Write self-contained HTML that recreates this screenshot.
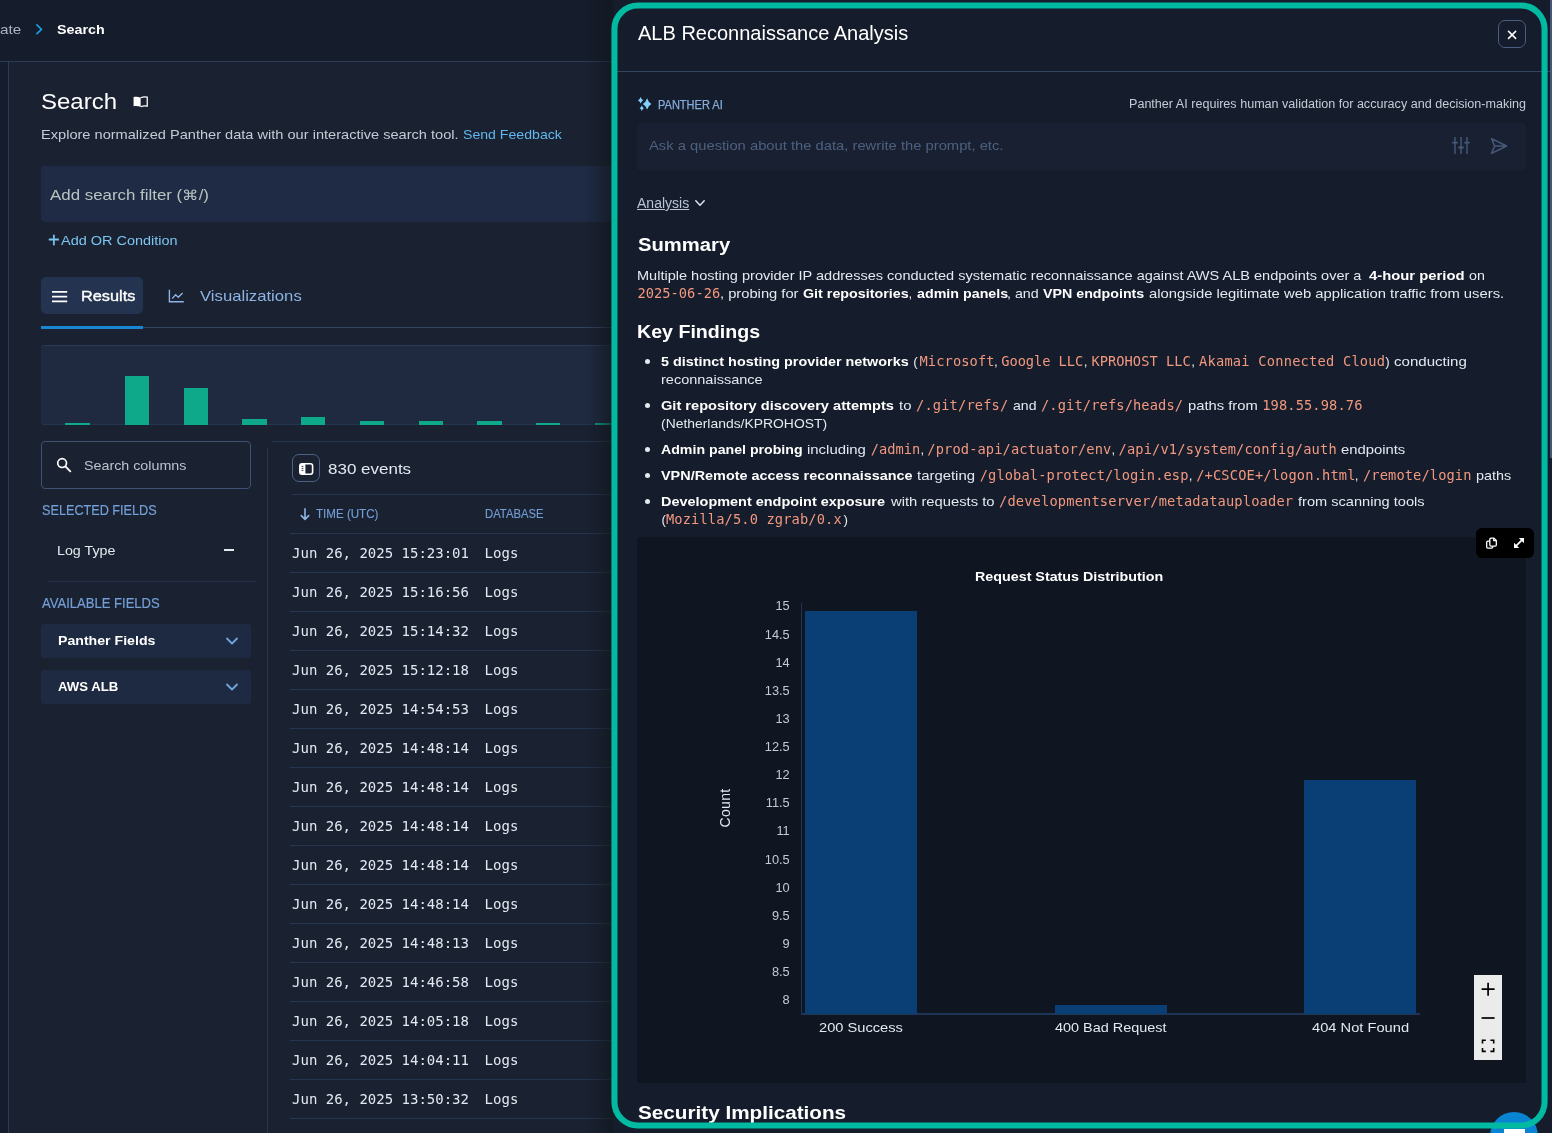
<!DOCTYPE html>
<html lang="en">
<head>
<meta charset="utf-8">
<title>Search - ALB Reconnaissance Analysis</title>
<style>
*{box-sizing:border-box;margin:0;padding:0}
html,body{width:1552px;height:1133px;overflow:hidden;background:#1a2131;font-family:"Liberation Sans",sans-serif;color:#e4e9f1}
.abs,.t{position:absolute;white-space:nowrap}
.t{line-height:1}
.layer{position:absolute;left:0;top:0;width:1552px;height:1133px;overflow:hidden;will-change:transform}
#topbar{position:absolute;left:0;top:0;width:1552px;height:62px;background:#151c2b;border-bottom:1px solid #2d3d59}
#strip{position:absolute;left:0;top:62px;width:9px;height:1080px;background:#151c2b;border-right:1px solid #2b3a57}
.hl{position:absolute;height:1px;background:#26364f}
.bar{position:absolute;bottom:0;width:24.4px;background:#0ea88a}
#drawer{position:absolute;left:613px;top:0;width:939px;height:1133px;background:#151c2b;}
#teal{position:absolute;left:611.4px;top:2.45px;width:936.2px;height:1126.1px;border:6.1px solid #01baa1;border-radius:25px}
.cb{position:absolute;width:112.3px;background:#0a3f76}
</style>
</head>
<body>
<div class="layer" id="left">
  <div id="topbar"></div>
  <div id="strip"></div>
  <svg class="abs" style="left:35px;top:23px" width="9" height="13" viewBox="0 0 9 13"><path d="M1.9 1.9 L6.5 6.3 L1.9 10.7" fill="none" stroke="#1a9be6" stroke-width="1.7" stroke-linecap="round" stroke-linejoin="round"/></svg>
  <svg class="abs" style="left:132.8px;top:96.4px" width="15.5" height="11.7" viewBox="0 0 16 13" preserveAspectRatio="none"><path d="M0.6 1.2 C3 0.5 5.4 0.7 7.9 1.9 L7.9 12 C5.4 10.9 3 10.8 0.6 11.3 Z" fill="#fff"/><path d="M7.9 1.9 C9.9 0.9 12.2 0.6 14.7 1.2 L14.7 11.3 C12.2 10.8 9.9 11 7.9 12" fill="none" stroke="#fff" stroke-width="1.3"/></svg>

  <div class="abs" style="left:41px;top:166px;width:580px;height:56px;background:#1f2a44;border-radius:4px"></div>

  <div class="abs" style="left:41px;top:277px;width:101.6px;height:36.6px;background:#24334f;border-radius:5px"></div>
  <svg class="abs" style="left:51.5px;top:289.5px" width="16" height="13" viewBox="0 0 16 13"><path d="M0 1.8H15.2M0 6.6H15.2M0 11.4H15.2" stroke="#fff" stroke-width="1.7"/></svg>
  <svg class="abs" style="left:168px;top:289px" width="17" height="15" viewBox="0 0 17 15"><path d="M1.4 0.8V12.7H15.8" fill="none" stroke="#8db4e3" stroke-width="1.4"/><path d="M4.2 9.6L7.6 5.8L10.3 8.3L14.6 4" fill="none" stroke="#8db4e3" stroke-width="1.4" stroke-linejoin="round"/></svg>
  <div class="abs" style="left:41px;top:327px;width:580px;height:1px;background:#34435e"></div>
  <div class="abs" style="left:41px;top:325.5px;width:101.6px;height:3.2px;background:#1a86d2"></div>

  <div class="abs" style="left:41px;top:345px;width:580px;height:79.5px;background:#1f2a40;border-radius:3px;overflow:hidden;border-top:1px solid #2a3a55;box-shadow:inset 0 -1px 0 #27364f">
    <div class="bar" style="left:24.2px;height:1.5px"></div>
    <div class="bar" style="left:83.8px;height:48.3px"></div>
    <div class="bar" style="left:142.5px;height:36.3px"></div>
    <div class="bar" style="left:201.2px;height:5.8px"></div>
    <div class="bar" style="left:259.9px;height:7.8px"></div>
    <div class="bar" style="left:319px;height:3.8px"></div>
    <div class="bar" style="left:377.7px;height:3.8px"></div>
    <div class="bar" style="left:436.4px;height:3.8px"></div>
    <div class="bar" style="left:494.6px;height:1.4px"></div>
    <div class="bar" style="left:553.5px;height:1.4px"></div>
  </div>

  <div class="abs" style="left:41px;top:441px;width:210px;height:48px;border:1px solid #3d5272;border-radius:4px"></div>
  <svg class="abs" style="left:56px;top:457px" width="16" height="16" viewBox="0 0 16 16"><circle cx="6.1" cy="6.1" r="4.4" fill="none" stroke="#fff" stroke-width="1.7"/><path d="M9.4 9.4L14.3 14.3" stroke="#fff" stroke-width="1.9" stroke-linecap="round"/></svg>
  <div class="abs" style="left:224px;top:549px;width:10px;height:1.6px;background:#e4e9f1"></div>
  <div class="hl" style="left:47px;top:581px;width:209px;background:#232f48"></div>
  <div class="abs" style="left:41px;top:624px;width:210px;height:34px;background:#1e2a41;border-radius:3px"></div>
  <svg class="abs" style="left:225px;top:636px" width="14" height="10" viewBox="0 0 14 10"><path d="M2 2.5L7 7.5L12 2.5" fill="none" stroke="#6ea6e0" stroke-width="1.8" stroke-linecap="round" stroke-linejoin="round"/></svg>
  <div class="abs" style="left:41px;top:670px;width:210px;height:34px;background:#1e2a41;border-radius:3px"></div>
  <svg class="abs" style="left:225px;top:682px" width="14" height="10" viewBox="0 0 14 10"><path d="M2 2.5L7 7.5L12 2.5" fill="none" stroke="#6ea6e0" stroke-width="1.8" stroke-linecap="round" stroke-linejoin="round"/></svg>

  <div class="abs" style="left:267px;top:448px;width:1px;height:700px;background:#26364f"></div>
  <div class="hl" style="left:272px;top:441px;width:350px"></div>
  <div class="abs" style="left:292.3px;top:454.2px;width:27.7px;height:27.7px;border:1px solid #4d6386;border-radius:7px"></div>
  <svg class="abs" style="left:299px;top:462.5px" width="15" height="12" viewBox="0 0 15 12"><rect x="0.8" y="0.8" width="12.8" height="10.4" rx="2.2" fill="none" stroke="#fff" stroke-width="1.6"/><path d="M1 2.5 Q1 1 2.5 1 H6.4 V11 H2.5 Q1 11 1 9.5Z" fill="#fff"/><path d="M2.6 3.4H4.4M2.6 5.4H4.4M2.6 7.4H4.4" stroke="#1a2131" stroke-width="0.9"/></svg>
  <div class="hl" style="left:292px;top:494px;width:330px"></div>
  <svg class="abs" style="left:300px;top:507.8px" width="10" height="13" viewBox="0 0 10 13"><path d="M5 0.8V11.2M1.3 7.6L5 11.4L8.7 7.6" fill="none" stroke="#8db4e3" stroke-width="1.6" stroke-linecap="round" stroke-linejoin="round"/></svg>
  <div class="hl" style="left:290px;top:533px;width:332px"></div>
  <div class="hl" style="left:290px;top:572px;width:332px"></div>
  <div class="hl" style="left:290px;top:611px;width:332px"></div>
  <div class="hl" style="left:290px;top:650px;width:332px"></div>
  <div class="hl" style="left:290px;top:689px;width:332px"></div>
  <div class="hl" style="left:290px;top:728px;width:332px"></div>
  <div class="hl" style="left:290px;top:767px;width:332px"></div>
  <div class="hl" style="left:290px;top:806px;width:332px"></div>
  <div class="hl" style="left:290px;top:845px;width:332px"></div>
  <div class="hl" style="left:290px;top:884px;width:332px"></div>
  <div class="hl" style="left:290px;top:923px;width:332px"></div>
  <div class="hl" style="left:290px;top:962px;width:332px"></div>
  <div class="hl" style="left:290px;top:1001px;width:332px"></div>
  <div class="hl" style="left:290px;top:1040px;width:332px"></div>
  <div class="hl" style="left:290px;top:1079px;width:332px"></div>
  <div class="hl" style="left:290px;top:1118px;width:332px"></div>
  
<span class="t" style="left:0.00px;top:23.12px;font-size:13.3px;color:#aab3c2;transform:scaleX(1.1498);transform-origin:0 0;">ate</span>
<span class="t" style="left:57.00px;top:23.12px;font-size:13.3px;color:#ffffff;font-weight:bold;transform:scaleX(1.0740);transform-origin:0 0;">Search</span>
<span class="t" style="left:41.44px;top:91.44px;font-size:22.6px;color:#ffffff;transform:scaleX(1.0625);transform-origin:0 0;">Search</span>
<span class="t" style="left:41.42px;top:128.12px;font-size:13.5px;color:#c5cbd5;transform:scaleX(1.0806);transform-origin:0 0;">Explore normalized Panther data with our interactive search tool.</span>
<span class="t" style="left:463.40px;top:128.12px;font-size:13.5px;color:#62b8ee;transform:scaleX(1.0452);transform-origin:0 0;">Send Feedback</span>
<span class="t" style="left:49.80px;top:187.76px;font-size:14.4px;color:#b9c4c0;transform:scaleX(1.1724);transform-origin:0 0;">Add search filter (⌘/)</span>
<span class="t" style="left:47.90px;top:229.95px;font-size:20px;color:#7cc6f2;-webkit-text-stroke:0.35px #7cc6f2;">+</span>
<span class="t" style="left:61.40px;top:233.82px;font-size:13.5px;color:#7cc6f2;transform:scaleX(1.0711);transform-origin:0 0;">Add OR Condition</span>
<span class="t" style="left:80.97px;top:288.56px;font-size:14.4px;color:#ffffff;transform:scaleX(1.1327);transform-origin:0 0;-webkit-text-stroke:0.35px #fff;">Results</span>
<span class="t" style="left:199.90px;top:288.56px;font-size:14.4px;color:#8db4e3;transform:scaleX(1.1596);transform-origin:0 0;">Visualizations</span>
<span class="t" style="left:84.20px;top:458.62px;font-size:13.5px;color:#bcc3cf;transform:scaleX(1.0573);transform-origin:0 0;">Search columns</span>
<span class="t" style="left:41.60px;top:503.16px;font-size:14px;color:#749fd6;transform:scaleX(0.9045);transform-origin:0 0;-webkit-text-stroke:0.2px #749fd6;">SELECTED FIELDS</span>
<span class="t" style="left:56.95px;top:543.67px;font-size:13.6px;color:#e4e9f1;transform:scaleX(1.0484);transform-origin:0 0;">Log Type</span>
<span class="t" style="left:41.60px;top:595.97px;font-size:14px;color:#749fd6;transform:scaleX(0.9319);transform-origin:0 0;-webkit-text-stroke:0.2px #749fd6;">AVAILABLE FIELDS</span>
<span class="t" style="left:57.50px;top:634.47px;font-size:13.6px;color:#ffffff;font-weight:bold;transform:scaleX(1.0396);transform-origin:0 0;">Panther Fields</span>
<span class="t" style="left:57.50px;top:680.47px;font-size:13.6px;color:#ffffff;font-weight:bold;transform:scaleX(0.9704);transform-origin:0 0;">AWS ALB</span>
<span class="t" style="left:328.40px;top:462.01px;font-size:14.5px;color:#e4e9f1;transform:scaleX(1.1713);transform-origin:0 0;">830 events</span>
<span class="t" style="left:316.20px;top:507.37px;font-size:13px;color:#729dd5;transform:scaleX(0.8908);transform-origin:0 0;-webkit-text-stroke:0.15px #729dd5;">TIME (UTC)</span>
<span class="t" style="left:484.53px;top:507.37px;font-size:13px;color:#729dd5;transform:scaleX(0.8674);transform-origin:0 0;-webkit-text-stroke:0.15px #729dd5;">DATABASE</span>
<span class="t" style="left:292.10px;top:546.26px;font-size:14px;color:#e4e9f1;font-family:'DejaVu Sans Mono', monospace;letter-spacing:-0.009px;">Jun 26, 2025 15:23:01</span>
<span class="t" style="left:484.40px;top:546.26px;font-size:14px;color:#e4e9f1;font-family:'DejaVu Sans Mono', monospace;letter-spacing:0.105px;">Logs</span>
<span class="t" style="left:292.10px;top:585.26px;font-size:14px;color:#e4e9f1;font-family:'DejaVu Sans Mono', monospace;letter-spacing:-0.009px;">Jun 26, 2025 15:16:56</span>
<span class="t" style="left:484.40px;top:585.26px;font-size:14px;color:#e4e9f1;font-family:'DejaVu Sans Mono', monospace;letter-spacing:0.105px;">Logs</span>
<span class="t" style="left:292.10px;top:624.26px;font-size:14px;color:#e4e9f1;font-family:'DejaVu Sans Mono', monospace;letter-spacing:-0.009px;">Jun 26, 2025 15:14:32</span>
<span class="t" style="left:484.40px;top:624.26px;font-size:14px;color:#e4e9f1;font-family:'DejaVu Sans Mono', monospace;letter-spacing:0.105px;">Logs</span>
<span class="t" style="left:292.10px;top:663.26px;font-size:14px;color:#e4e9f1;font-family:'DejaVu Sans Mono', monospace;letter-spacing:-0.009px;">Jun 26, 2025 15:12:18</span>
<span class="t" style="left:484.40px;top:663.26px;font-size:14px;color:#e4e9f1;font-family:'DejaVu Sans Mono', monospace;letter-spacing:0.105px;">Logs</span>
<span class="t" style="left:292.10px;top:702.26px;font-size:14px;color:#e4e9f1;font-family:'DejaVu Sans Mono', monospace;letter-spacing:-0.009px;">Jun 26, 2025 14:54:53</span>
<span class="t" style="left:484.40px;top:702.26px;font-size:14px;color:#e4e9f1;font-family:'DejaVu Sans Mono', monospace;letter-spacing:0.105px;">Logs</span>
<span class="t" style="left:292.10px;top:741.26px;font-size:14px;color:#e4e9f1;font-family:'DejaVu Sans Mono', monospace;letter-spacing:-0.009px;">Jun 26, 2025 14:48:14</span>
<span class="t" style="left:484.40px;top:741.26px;font-size:14px;color:#e4e9f1;font-family:'DejaVu Sans Mono', monospace;letter-spacing:0.105px;">Logs</span>
<span class="t" style="left:292.10px;top:780.26px;font-size:14px;color:#e4e9f1;font-family:'DejaVu Sans Mono', monospace;letter-spacing:-0.009px;">Jun 26, 2025 14:48:14</span>
<span class="t" style="left:484.40px;top:780.26px;font-size:14px;color:#e4e9f1;font-family:'DejaVu Sans Mono', monospace;letter-spacing:0.105px;">Logs</span>
<span class="t" style="left:292.10px;top:819.26px;font-size:14px;color:#e4e9f1;font-family:'DejaVu Sans Mono', monospace;letter-spacing:-0.009px;">Jun 26, 2025 14:48:14</span>
<span class="t" style="left:484.40px;top:819.26px;font-size:14px;color:#e4e9f1;font-family:'DejaVu Sans Mono', monospace;letter-spacing:0.105px;">Logs</span>
<span class="t" style="left:292.10px;top:858.26px;font-size:14px;color:#e4e9f1;font-family:'DejaVu Sans Mono', monospace;letter-spacing:-0.009px;">Jun 26, 2025 14:48:14</span>
<span class="t" style="left:484.40px;top:858.26px;font-size:14px;color:#e4e9f1;font-family:'DejaVu Sans Mono', monospace;letter-spacing:0.105px;">Logs</span>
<span class="t" style="left:292.10px;top:897.26px;font-size:14px;color:#e4e9f1;font-family:'DejaVu Sans Mono', monospace;letter-spacing:-0.009px;">Jun 26, 2025 14:48:14</span>
<span class="t" style="left:484.40px;top:897.26px;font-size:14px;color:#e4e9f1;font-family:'DejaVu Sans Mono', monospace;letter-spacing:0.105px;">Logs</span>
<span class="t" style="left:292.10px;top:936.26px;font-size:14px;color:#e4e9f1;font-family:'DejaVu Sans Mono', monospace;letter-spacing:-0.009px;">Jun 26, 2025 14:48:13</span>
<span class="t" style="left:484.40px;top:936.26px;font-size:14px;color:#e4e9f1;font-family:'DejaVu Sans Mono', monospace;letter-spacing:0.105px;">Logs</span>
<span class="t" style="left:292.10px;top:975.26px;font-size:14px;color:#e4e9f1;font-family:'DejaVu Sans Mono', monospace;letter-spacing:-0.009px;">Jun 26, 2025 14:46:58</span>
<span class="t" style="left:484.40px;top:975.26px;font-size:14px;color:#e4e9f1;font-family:'DejaVu Sans Mono', monospace;letter-spacing:0.105px;">Logs</span>
<span class="t" style="left:292.10px;top:1014.26px;font-size:14px;color:#e4e9f1;font-family:'DejaVu Sans Mono', monospace;letter-spacing:-0.009px;">Jun 26, 2025 14:05:18</span>
<span class="t" style="left:484.40px;top:1014.26px;font-size:14px;color:#e4e9f1;font-family:'DejaVu Sans Mono', monospace;letter-spacing:0.105px;">Logs</span>
<span class="t" style="left:292.10px;top:1053.26px;font-size:14px;color:#e4e9f1;font-family:'DejaVu Sans Mono', monospace;letter-spacing:-0.009px;">Jun 26, 2025 14:04:11</span>
<span class="t" style="left:484.40px;top:1053.26px;font-size:14px;color:#e4e9f1;font-family:'DejaVu Sans Mono', monospace;letter-spacing:0.105px;">Logs</span>
<span class="t" style="left:292.10px;top:1092.26px;font-size:14px;color:#e4e9f1;font-family:'DejaVu Sans Mono', monospace;letter-spacing:-0.009px;">Jun 26, 2025 13:50:32</span>
<span class="t" style="left:484.40px;top:1092.26px;font-size:14px;color:#e4e9f1;font-family:'DejaVu Sans Mono', monospace;letter-spacing:0.105px;">Logs</span>
<span class="t" style="left:292.10px;top:1131.26px;font-size:14px;color:#5b6576;font-family:'DejaVu Sans Mono', monospace;letter-spacing:-0.009px;">Jun 26, 2025 13:49:44</span>
<span class="t" style="left:484.40px;top:1131.26px;font-size:14px;color:#5b6576;font-family:'DejaVu Sans Mono', monospace;letter-spacing:0.105px;">Logs</span>
</div>

<div class="abs" style="left:586px;top:0;width:28px;height:1133px;background:linear-gradient(to right,rgba(18,24,30,0),rgba(18,24,30,.35) 50%,rgba(18,24,30,.78))"></div>
<div id="drawer">
  <div class="abs" style="left:0;top:71px;width:939px;height:1px;background:#35455f"></div>
  <div class="abs" style="left:937px;top:0;width:2px;height:458px;background:#46587a"></div>
</div>
<div class="layer" id="panel">
  <!-- close -->
  <div class="abs" style="left:1498px;top:20px;width:27.7px;height:27.7px;border:1px solid #4a5f82;border-radius:7px"></div>
  <svg class="abs" style="left:1506px;top:29px" width="12" height="12" viewBox="0 0 12 12"><path d="M2.1 1.9L10.1 9.9M10.1 1.9L2.1 9.9" stroke="#fff" stroke-width="1.5"/></svg>
  <!-- sparkle -->
  <svg class="abs" style="left:637px;top:96px" width="16" height="16" viewBox="0 0 16 16" fill="#7fd0fa"><path d="M10.1 2.3 L12 5.9 L14.4 7.9 L12 9.9 L10.1 13.4 L8.2 9.9 L5.8 7.9 L8.2 5.9Z"/><path d="M3.6 1 L4.8 3.3 L6.3 4.3 L4.8 5.4 L3.6 7.6 L2.4 5.4 L0.9 4.3 L2.4 3.3Z"/><path d="M4.8 9.4 L5.8 11.3 L7 12.2 L5.8 13.1 L4.8 15 L3.8 13.1 L2.6 12.2 L3.8 11.3Z"/></svg>
  <!-- input -->
  <div class="abs" style="left:637.4px;top:122.5px;width:889px;height:47px;background:#182031;border-radius:3px;box-shadow:0 0 3px #182031"></div>
  <svg class="abs" style="left:1451px;top:135px" width="20" height="22" viewBox="0 0 20 22" fill="none" stroke="#47597a" stroke-width="1.4"><path d="M4 2V19M10 2V19M16 2V19"/><path d="M1.3 7.7H6.7M7.3 12.5H12.7M13.3 7.7H18.7" stroke-width="1.8"/></svg>
  <svg class="abs" style="left:1489px;top:136px" width="20" height="20" viewBox="0 0 20 20" fill="none" stroke="#47597a" stroke-width="1.5" stroke-linejoin="round"><path d="M2.6 2.6 L17.6 10 L2.6 17.4 L5.6 10 Z M5.6 10 H17"/></svg>
  <!-- analysis chevron -->
  <svg class="abs" style="left:694px;top:198px" width="12" height="10" viewBox="0 0 12 10"><path d="M1.8 2.8L6 7.2L10.2 2.8" fill="none" stroke="#dfe5ee" stroke-width="1.5" stroke-linecap="round" stroke-linejoin="round"/></svg>
  <!-- bullets -->
  <div class="abs" style="left:645.4px;top:358.8px;width:5px;height:5px;border-radius:50%;background:#e4e9f1"></div>
  <div class="abs" style="left:645.4px;top:402.8px;width:5px;height:5px;border-radius:50%;background:#e4e9f1"></div>
  <div class="abs" style="left:645.4px;top:446.8px;width:5px;height:5px;border-radius:50%;background:#e4e9f1"></div>
  <div class="abs" style="left:645.4px;top:472.8px;width:5px;height:5px;border-radius:50%;background:#e4e9f1"></div>
  <div class="abs" style="left:645.4px;top:498.8px;width:5px;height:5px;border-radius:50%;background:#e4e9f1"></div>
  <!-- chart -->
  <div class="abs" style="left:637.4px;top:536.5px;width:889px;height:546.5px;background:#0f1622;border-radius:2px"></div>
  <div class="abs" style="left:1476.2px;top:528px;width:57.8px;height:30px;background:#000;border-radius:6px"></div>
  <svg class="abs" style="left:1484.9px;top:536.8px" width="13" height="13" viewBox="0 0 14 14" fill="none" stroke="#fff" stroke-width="1.4" stroke-linejoin="round"><path d="M5.2 3.4 V2.4 Q5.2 1.2 6.4 1.2 H9.6 L12.2 3.8 V8.6 Q12.2 9.8 11 9.8 H6.4 Q5.2 9.8 5.2 8.6 Z"/><path d="M9.4 1.4 V4 H12"/><path d="M5 4.4 H3 Q1.8 4.4 1.8 5.6 V10.8 Q1.8 12 3 12 H7.2 Q8.4 12 8.4 10.8 V10"/></svg>
  <svg class="abs" style="left:1513px;top:537px" width="12" height="12" viewBox="0 0 12 12"><path d="M2.6 9.4L9.4 2.6" stroke="#fff" stroke-width="1.7"/><path d="M5.8 1H11V6.2Z M1 5.8V11H6.2Z" fill="#fff"/></svg>
  <div class="abs" style="left:801px;top:603px;width:1.3px;height:412px;background:#1f3555"></div>
  <div class="abs" style="left:801px;top:1013.2px;width:619px;height:1.5px;background:#1f3555"></div>
  <div class="cb" style="left:804.7px;top:611px;height:402.5px"></div>
  <div class="cb" style="left:1054.5px;top:1005px;height:8.5px"></div>
  <div class="cb" style="left:1303.8px;top:780px;height:233.5px"></div>
  <span class="t" style="left:724.6px;top:807.6px;font-size:14px;color:#e4e9f1;transform:translate(-50%,-50%) rotate(-90deg);letter-spacing:.35px">Count</span>
  <div class="abs" style="left:1473.9px;top:975px;width:28.2px;height:85px;background:#ebebeb"></div>
  <svg class="abs" style="left:1473.9px;top:975px" width="28.2" height="85" viewBox="0 0 28.2 85" fill="none" stroke="#000" stroke-width="1.7"><path d="M7.6 14.2H20.6M14.1 7.7V20.7"/><path d="M7.6 43H20.6"/><path d="M8.5 68.5V65.2H11.8M16.4 65.2H19.7V68.5M19.7 73.1V76.4H16.4M11.8 76.4H8.5V73.1" stroke-width="1.6"/></svg>
<span class="t" style="left:637.60px;top:24.35px;font-size:19.3px;color:#ffffff;transform:scaleX(1.0377);transform-origin:0 0;">ALB Reconnaissance Analysis</span>
<span class="t" style="left:657.70px;top:98.57px;font-size:12px;color:#86addc;transform:scaleX(0.9197);transform-origin:0 0;-webkit-text-stroke:0.25px #86addc;">PANTHER AI</span>
<span class="t" style="left:1128.50px;top:97.77px;font-size:12px;color:#c6ccd6;transform:scaleX(1.0479);transform-origin:0 0;">Panther AI requires human validation for accuracy and decision-making</span>
<span class="t" style="left:649.40px;top:138.72px;font-size:13.5px;color:#4e607f;transform:scaleX(1.0933);transform-origin:0 0;">Ask a question about the data, rewrite the prompt, etc.</span>
<span class="t" style="left:637.40px;top:195.97px;font-size:14px;color:#b9c4d6;transform:scaleX(1.0013);transform-origin:0 0;text-decoration:underline;text-underline-offset:1.3px;">Analysis</span>
<span class="t" style="left:637.60px;top:236.45px;font-size:18.8px;color:#ffffff;font-weight:bold;transform:scaleX(1.0772);transform-origin:0 0;">Summary</span>
<span class="t" style="left:637.12px;top:268.57px;font-size:13.4px;color:#e4e9f1;transform:scaleX(1.0850);transform-origin:0 0;">Multiple hosting provider IP addresses conducted systematic reconnaissance against AWS ALB endpoints over a</span>
<span class="t" style="left:1369.00px;top:268.57px;font-size:13.4px;color:#ffffff;font-weight:bold;transform:scaleX(1.1078);transform-origin:0 0;">4-hour period</span>
<span class="t" style="left:1469.20px;top:268.57px;font-size:13.4px;color:#e4e9f1;transform:scaleX(1.0659);transform-origin:0 0;">on</span>
<span class="t" style="left:637.40px;top:286.50px;font-size:13.7px;color:#f2987f;font-family:'DejaVu Sans Mono', monospace;letter-spacing:0.048px;">2025-06-26</span>
<span class="t" style="left:719.90px;top:286.57px;font-size:13.4px;color:#e4e9f1;transform:scaleX(1.0986);transform-origin:0 0;">, probing for</span>
<span class="t" style="left:803.40px;top:286.57px;font-size:13.4px;color:#ffffff;font-weight:bold;transform:scaleX(1.0678);transform-origin:0 0;">Git repositories</span>
<span class="t" style="left:908.60px;top:286.57px;font-size:13.4px;color:#e4e9f1;">,</span>
<span class="t" style="left:916.60px;top:286.57px;font-size:13.4px;color:#ffffff;font-weight:bold;transform:scaleX(1.0655);transform-origin:0 0;">admin panels</span>
<span class="t" style="left:1007.23px;top:286.57px;font-size:13.4px;color:#e4e9f1;transform:scaleX(1.0658);transform-origin:0 0;">, and</span>
<span class="t" style="left:1042.90px;top:286.57px;font-size:13.4px;color:#ffffff;font-weight:bold;transform:scaleX(1.0635);transform-origin:0 0;">VPN endpoints</span>
<span class="t" style="left:1148.80px;top:286.57px;font-size:13.4px;color:#e4e9f1;transform:scaleX(1.1055);transform-origin:0 0;">alongside legitimate web application traffic from users.</span>
<span class="t" style="left:636.56px;top:322.85px;font-size:18.8px;color:#ffffff;font-weight:bold;transform:scaleX(1.0441);transform-origin:0 0;">Key Findings</span>
<span class="t" style="left:661.40px;top:354.57px;font-size:13.4px;color:#ffffff;font-weight:bold;transform:scaleX(1.0738);transform-origin:0 0;">5 distinct hosting provider networks</span>
<span class="t" style="left:913.30px;top:354.57px;font-size:13.4px;color:#e4e9f1;">(</span>
<span class="t" style="left:919.50px;top:354.50px;font-size:13.7px;color:#f2987f;font-family:'DejaVu Sans Mono', monospace;letter-spacing:0.109px;">Microsoft</span>
<span class="t" style="left:994.00px;top:354.57px;font-size:13.4px;color:#e4e9f1;">,</span>
<span class="t" style="left:1001.30px;top:354.50px;font-size:13.7px;color:#f2987f;font-family:'DejaVu Sans Mono', monospace;letter-spacing:-0.052px;">Google LLC</span>
<span class="t" style="left:1083.80px;top:354.57px;font-size:13.4px;color:#e4e9f1;">,</span>
<span class="t" style="left:1091.50px;top:354.50px;font-size:13.7px;color:#f2987f;font-family:'DejaVu Sans Mono', monospace;letter-spacing:0.032px;">KPROHOST LLC</span>
<span class="t" style="left:1191.30px;top:354.57px;font-size:13.4px;color:#e4e9f1;">,</span>
<span class="t" style="left:1199.00px;top:354.50px;font-size:13.7px;color:#f2987f;font-family:'DejaVu Sans Mono', monospace;letter-spacing:0.226px;">Akamai Connected Cloud</span>
<span class="t" style="left:1385.30px;top:354.57px;font-size:13.4px;color:#e4e9f1;">)</span>
<span class="t" style="left:1393.60px;top:354.57px;font-size:13.4px;color:#e4e9f1;transform:scaleX(1.1240);transform-origin:0 0;">conducting</span>
<span class="t" style="left:661.40px;top:372.57px;font-size:13.4px;color:#e4e9f1;transform:scaleX(1.0831);transform-origin:0 0;">reconnaissance</span>
<span class="t" style="left:661.40px;top:398.57px;font-size:13.4px;color:#ffffff;font-weight:bold;transform:scaleX(1.0905);transform-origin:0 0;">Git repository discovery attempts</span>
<span class="t" style="left:899.10px;top:398.57px;font-size:13.4px;color:#e4e9f1;transform:scaleX(1.1100);transform-origin:0 0;">to</span>
<span class="t" style="left:916.00px;top:398.50px;font-size:13.7px;color:#f2987f;font-family:'DejaVu Sans Mono', monospace;letter-spacing:0.159px;">/.git/refs/</span>
<span class="t" style="left:1013.00px;top:398.57px;font-size:13.4px;color:#e4e9f1;transform:scaleX(1.0505);transform-origin:0 0;">and</span>
<span class="t" style="left:1041.00px;top:398.50px;font-size:13.7px;color:#f2987f;font-family:'DejaVu Sans Mono', monospace;letter-spacing:0.122px;">/.git/refs/heads/</span>
<span class="t" style="left:1188.20px;top:398.57px;font-size:13.4px;color:#e4e9f1;transform:scaleX(1.1029);transform-origin:0 0;">paths from</span>
<span class="t" style="left:1262.20px;top:398.50px;font-size:13.7px;color:#f2987f;font-family:'DejaVu Sans Mono', monospace;letter-spacing:0.123px;">198.55.98.76</span>
<span class="t" style="left:661.40px;top:416.57px;font-size:13.4px;color:#e4e9f1;transform:scaleX(1.0381);transform-origin:0 0;">(Netherlands/KPROHOST)</span>
<span class="t" style="left:661.40px;top:442.57px;font-size:13.4px;color:#ffffff;font-weight:bold;transform:scaleX(1.0574);transform-origin:0 0;">Admin panel probing</span>
<span class="t" style="left:807.20px;top:442.57px;font-size:13.4px;color:#e4e9f1;transform:scaleX(1.1143);transform-origin:0 0;">including</span>
<span class="t" style="left:870.70px;top:442.50px;font-size:13.7px;color:#f2987f;font-family:'DejaVu Sans Mono', monospace;letter-spacing:0.019px;">/admin</span>
<span class="t" style="left:920.50px;top:442.57px;font-size:13.4px;color:#e4e9f1;">,</span>
<span class="t" style="left:927.30px;top:442.50px;font-size:13.7px;color:#f2987f;font-family:'DejaVu Sans Mono', monospace;letter-spacing:0.126px;">/prod-api/actuator/env</span>
<span class="t" style="left:1111.50px;top:442.57px;font-size:13.4px;color:#e4e9f1;">,</span>
<span class="t" style="left:1118.50px;top:442.50px;font-size:13.7px;color:#f2987f;font-family:'DejaVu Sans Mono', monospace;letter-spacing:0.155px;">/api/v1/system/config/auth</span>
<span class="t" style="left:1341.40px;top:442.57px;font-size:13.4px;color:#e4e9f1;transform:scaleX(1.1066);transform-origin:0 0;">endpoints</span>
<span class="t" style="left:661.40px;top:468.57px;font-size:13.4px;color:#ffffff;font-weight:bold;transform:scaleX(1.0764);transform-origin:0 0;">VPN/Remote access reconnaissance</span>
<span class="t" style="left:916.90px;top:468.57px;font-size:13.4px;color:#e4e9f1;transform:scaleX(1.1130);transform-origin:0 0;">targeting</span>
<span class="t" style="left:979.70px;top:468.50px;font-size:13.7px;color:#f2987f;font-family:'DejaVu Sans Mono', monospace;letter-spacing:0.114px;">/global-protect/login.esp</span>
<span class="t" style="left:1188.80px;top:468.57px;font-size:13.4px;color:#e4e9f1;">,</span>
<span class="t" style="left:1196.20px;top:468.50px;font-size:13.7px;color:#f2987f;font-family:'DejaVu Sans Mono', monospace;letter-spacing:0.148px;">/+CSCOE+/logon.html</span>
<span class="t" style="left:1354.80px;top:468.57px;font-size:13.4px;color:#e4e9f1;">,</span>
<span class="t" style="left:1363.00px;top:468.50px;font-size:13.7px;color:#f2987f;font-family:'DejaVu Sans Mono', monospace;letter-spacing:0.109px;">/remote/login</span>
<span class="t" style="left:1475.70px;top:468.57px;font-size:13.4px;color:#e4e9f1;transform:scaleX(1.0737);transform-origin:0 0;">paths</span>
<span class="t" style="left:661.40px;top:494.57px;font-size:13.4px;color:#ffffff;font-weight:bold;transform:scaleX(1.0790);transform-origin:0 0;">Development endpoint exposure</span>
<span class="t" style="left:891.00px;top:494.57px;font-size:13.4px;color:#e4e9f1;transform:scaleX(1.1035);transform-origin:0 0;">with requests to</span>
<span class="t" style="left:999.00px;top:494.50px;font-size:13.7px;color:#f2987f;font-family:'DejaVu Sans Mono', monospace;letter-spacing:0.165px;">/developmentserver/metadatauploader</span>
<span class="t" style="left:1297.80px;top:494.57px;font-size:13.4px;color:#e4e9f1;transform:scaleX(1.0901);transform-origin:0 0;">from scanning tools</span>
<span class="t" style="left:661.60px;top:512.57px;font-size:13.4px;color:#e4e9f1;">(</span>
<span class="t" style="left:666.00px;top:512.50px;font-size:13.7px;color:#f2987f;font-family:'DejaVu Sans Mono', monospace;letter-spacing:0.134px;">Mozilla/5.0 zgrab/0.x</span>
<span class="t" style="left:843.50px;top:512.57px;font-size:13.4px;color:#e4e9f1;">)</span>
<span class="t" style="left:975.00px;top:570.17px;font-size:13.4px;color:#ffffff;font-weight:bold;transform:scaleX(1.0673);transform-origin:0 0;">Request Status Distribution</span>
<span class="t" style="left:775.48px;top:600.37px;font-size:12.8px;color:#c4cad5;">15</span>
<span class="t" style="left:764.81px;top:628.50px;font-size:12.8px;color:#c4cad5;">14.5</span>
<span class="t" style="left:775.48px;top:656.63px;font-size:12.8px;color:#c4cad5;">14</span>
<span class="t" style="left:764.81px;top:684.76px;font-size:12.8px;color:#c4cad5;">13.5</span>
<span class="t" style="left:775.48px;top:712.89px;font-size:12.8px;color:#c4cad5;">13</span>
<span class="t" style="left:764.81px;top:741.02px;font-size:12.8px;color:#c4cad5;">12.5</span>
<span class="t" style="left:775.48px;top:769.15px;font-size:12.8px;color:#c4cad5;">12</span>
<span class="t" style="left:765.76px;top:797.28px;font-size:12.8px;color:#c4cad5;">11.5</span>
<span class="t" style="left:776.43px;top:825.41px;font-size:12.8px;color:#c4cad5;">11</span>
<span class="t" style="left:764.81px;top:853.54px;font-size:12.8px;color:#c4cad5;">10.5</span>
<span class="t" style="left:775.48px;top:881.67px;font-size:12.8px;color:#c4cad5;">10</span>
<span class="t" style="left:771.93px;top:909.80px;font-size:12.8px;color:#c4cad5;">9.5</span>
<span class="t" style="left:782.60px;top:937.93px;font-size:12.8px;color:#c4cad5;">9</span>
<span class="t" style="left:771.93px;top:966.06px;font-size:12.8px;color:#c4cad5;">8.5</span>
<span class="t" style="left:782.60px;top:994.19px;font-size:12.8px;color:#c4cad5;">8</span>
<span class="t" style="left:819.20px;top:1020.87px;font-size:13.4px;color:#e4e9f1;transform:scaleX(1.0939);transform-origin:0 0;">200 Success</span>
<span class="t" style="left:1054.80px;top:1020.87px;font-size:13.4px;color:#e4e9f1;transform:scaleX(1.0775);transform-origin:0 0;">400 Bad Request</span>
<span class="t" style="left:1311.90px;top:1020.87px;font-size:13.4px;color:#e4e9f1;transform:scaleX(1.0960);transform-origin:0 0;">404 Not Found</span>
<span class="t" style="left:637.60px;top:1103.85px;font-size:18.8px;color:#ffffff;font-weight:bold;transform:scaleX(1.1015);transform-origin:0 0;">Security Implications</span>
</div>
<!-- chat bubble -->
<div class="abs" style="left:1490px;top:1112.3px;width:48px;height:48px;border-radius:50%;background:#0884d2"></div>
<div class="abs" style="left:1503.5px;top:1128.8px;width:21px;height:10px;background:#fff"></div>
<svg class="abs" style="left:0;top:0" width="1552" height="1133" viewBox="0 0 1552 1133"><rect x="614.45" y="5.5" width="930.1" height="1120" rx="23.5" ry="23.5" fill="none" stroke="#01baa1" stroke-width="6.1"/></svg>
</body>
</html>
